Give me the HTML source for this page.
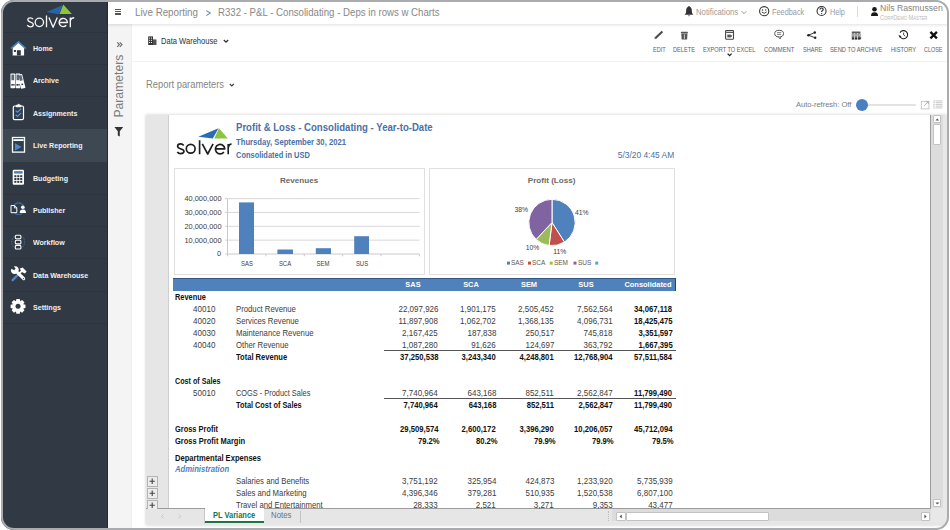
<!DOCTYPE html><html><head><meta charset="utf-8"><style>
*{margin:0;padding:0;box-sizing:border-box}
html,body{width:950px;height:530px;overflow:hidden;background:#fff;font-family:"Liberation Sans",sans-serif}
.a{position:absolute}
.t{position:absolute;line-height:1;white-space:nowrap}
#clip{position:absolute;left:0;top:0;width:950px;height:530px;clip-path:inset(0px 1px 0px 1px round 13px);background:#fff;overflow:hidden}
#bord{position:absolute;left:1px;top:0;width:948px;height:530px;border:2.3px solid #a9abae;border-bottom-width:2.6px;border-radius:13px;z-index:50}
</style></head><body>
<div id="clip">
<div class="a" style="left:0;top:0;width:108px;height:530px;background:#313944"></div>
<div class="a" style="left:106.5px;top:0;width:1.5px;height:530px;background:#262c35"></div>
<svg class="a" style="left:0;top:0" width="108" height="32" viewBox="0 0 108 32"><polygon points="46.4,12 62.6,5.2 58.8,14.2" fill="#2765ab"/><polygon points="63.3,4.4 71.9,14 59.5,14" fill="#8cc43f"/><g fill="none" stroke="#f4f4f4" stroke-width="1.35" stroke-linejoin="round"><path d="M33,19.2 C32.2,18 31,17.8 30.3,17.8 C28.6,17.8 27.8,18.7 27.8,19.8 C27.8,22.6 33.3,21.6 33.3,24.6 C33.3,26 32.2,26.8 30.4,26.8 C29,26.8 27.9,26.2 27.3,25.2"/><circle cx="39.35" cy="22.35" r="4.2"/><path d="M46.5,15.4 V27.3"/><path d="M48.9,17.6 L53.1,27.2 L57.3,17.6"/><path d="M59.4,22.5 H67.4 A4.15,4.15 0 1 0 66.3,25.3"/><path d="M70.3,27.3 V17.6 M70.3,20.6 C70.9,18.4 72.2,17.7 74.2,17.7"/></g></svg>
<div class="a" style="left:3px;top:31.50px;width:104px;height:1px;background:#2d343e"></div>
<div class="a" style="left:3px;top:63.90px;width:104px;height:1px;background:#2d343e"></div>
<div class="a" style="left:3px;top:96.30px;width:104px;height:1px;background:#2d343e"></div>
<div class="a" style="left:3px;top:128.70px;width:104px;height:1px;background:#2d343e"></div>
<div class="a" style="left:3px;top:161.10px;width:104px;height:1px;background:#2d343e"></div>
<div class="a" style="left:3px;top:193.50px;width:104px;height:1px;background:#2d343e"></div>
<div class="a" style="left:3px;top:225.90px;width:104px;height:1px;background:#2d343e"></div>
<div class="a" style="left:3px;top:258.30px;width:104px;height:1px;background:#2d343e"></div>
<div class="a" style="left:3px;top:290.70px;width:104px;height:1px;background:#2d343e"></div>
<div class="a" style="left:3px;top:323.10px;width:104px;height:1px;background:#2d343e"></div>
<div class="a" style="left:3px;top:129.20px;width:104px;height:32.40px;background:#3e4853"></div>
<div class="t" style="left:32.80px;top:45.08px;font-size:7.7px;color:#f0f0f0;font-weight:bold;font-style:normal;transform:scaleX(0.92);transform-origin:left;">Home</div>
<div class="t" style="left:32.80px;top:77.48px;font-size:7.7px;color:#f0f0f0;font-weight:bold;font-style:normal;transform:scaleX(0.92);transform-origin:left;">Archive</div>
<div class="t" style="left:32.80px;top:109.88px;font-size:7.7px;color:#f0f0f0;font-weight:bold;font-style:normal;transform:scaleX(0.92);transform-origin:left;">Assignments</div>
<div class="t" style="left:32.80px;top:142.28px;font-size:7.7px;color:#f0f0f0;font-weight:bold;font-style:normal;transform:scaleX(0.92);transform-origin:left;">Live Reporting</div>
<div class="t" style="left:32.80px;top:174.68px;font-size:7.7px;color:#f0f0f0;font-weight:bold;font-style:normal;transform:scaleX(0.92);transform-origin:left;">Budgeting</div>
<div class="t" style="left:32.80px;top:207.08px;font-size:7.7px;color:#f0f0f0;font-weight:bold;font-style:normal;transform:scaleX(0.92);transform-origin:left;">Publisher</div>
<div class="t" style="left:32.80px;top:239.48px;font-size:7.7px;color:#f0f0f0;font-weight:bold;font-style:normal;transform:scaleX(0.92);transform-origin:left;">Workflow</div>
<div class="t" style="left:32.80px;top:271.88px;font-size:7.7px;color:#f0f0f0;font-weight:bold;font-style:normal;transform:scaleX(0.92);transform-origin:left;">Data Warehouse</div>
<div class="t" style="left:32.80px;top:304.28px;font-size:7.7px;color:#f0f0f0;font-weight:bold;font-style:normal;transform:scaleX(0.92);transform-origin:left;">Settings</div>
<div class="a" style="left:108px;top:23.7px;width:24px;height:507px;background:#f4f4f4"></div>
<div class="a" style="left:131.2px;top:23.7px;width:1px;height:507px;background:#efefef"></div>
<div class="a" style="left:108px;top:0;width:842px;height:23.7px;background:#fff;box-shadow:0 1px 3px rgba(0,0,0,0.13);z-index:3"></div>
<div class="a" style="left:0;top:0;width:950px;height:30px;z-index:4">
<div class="a" style="left:115.2px;top:8.6px;width:6.2px;height:1.3px;background:#555"></div>
<div class="a" style="left:115.2px;top:11px;width:6.2px;height:1.3px;background:#555"></div>
<div class="a" style="left:115.2px;top:13.4px;width:6.2px;height:1.3px;background:#555"></div>
<div class="t" style="left:135.30px;top:8.10px;font-size:10.4px;color:#888888;font-weight:normal;font-style:normal;transform:scaleX(0.94);transform-origin:left;">Live Reporting</div>
<svg class="a" style="left:203px;top:8px" width="10" height="10" viewBox="0 0 10 10"><polyline points="3.3,2.6 7.3,5.1 3.3,7.6" fill="none" stroke="#5f86b3" stroke-width="1.05"/></svg>
<div class="t" style="left:217.80px;top:8.10px;font-size:10.4px;color:#888888;font-weight:normal;font-style:normal;transform:scaleX(0.928);transform-origin:left;">R332 - P&amp;L - Consolidating - Deps in rows w Charts</div>
<svg class="a" style="left:683px;top:5px" width="12" height="13" viewBox="0 0 12 13"><path d="M6,1.8 C3.8,1.8 3.2,3.6 3.2,5.6 C3.2,8 2.6,8.8 1.6,9.8 H10.4 C9.4,8.8 8.8,8 8.8,5.6 C8.8,3.6 8.2,1.8 6,1.8 Z" fill="#333"/><rect x="5.4" y="1" width="1.2" height="1.4" fill="#333"/><path d="M4.8,10.4 A1.3,1.3 0 0 0 7.2,10.4 Z" fill="#333"/></svg>
<div class="t" style="left:696.00px;top:8.15px;font-size:8.8px;color:#9a9a9a;font-weight:normal;font-style:normal;transform:scaleX(0.88);transform-origin:left;">Notifications</div>
<svg class="a" style="left:740px;top:9px" width="8" height="7" viewBox="0 0 8 7"><polyline points="1.6,2.2 4,4.6 6.4,2.2" fill="none" stroke="#999" stroke-width="1"/></svg>
<svg class="a" style="left:758px;top:5px" width="12" height="12" viewBox="0 0 12 12"><circle cx="6.2" cy="6.2" r="4.6" fill="none" stroke="#333" stroke-width="1.1"/><circle cx="4.6" cy="5" r="0.7" fill="#333"/><circle cx="7.8" cy="5" r="0.7" fill="#333"/><path d="M3.8,7 Q6.2,9.6 8.6,7" fill="none" stroke="#333" stroke-width="0.9"/></svg>
<div class="t" style="left:771.90px;top:8.15px;font-size:8.8px;color:#9a9a9a;font-weight:normal;font-style:normal;transform:scaleX(0.836);transform-origin:left;">Feedback</div>
<svg class="a" style="left:815px;top:5px" width="12" height="12" viewBox="0 0 12 12"><circle cx="6.55" cy="5.95" r="4.5" fill="none" stroke="#333" stroke-width="1.1"/><path d="M5,4.6 C5,3.5 5.7,3 6.6,3 C7.6,3 8.2,3.6 8.2,4.4 C8.2,5.6 6.6,5.6 6.6,7" fill="none" stroke="#333" stroke-width="1.2"/><circle cx="6.6" cy="8.6" r="0.7" fill="#333"/></svg>
<div class="t" style="left:829.70px;top:8.15px;font-size:8.8px;color:#9a9a9a;font-weight:normal;font-style:normal;transform:scaleX(0.82);transform-origin:left;">Help</div>
<div class="a" style="left:856.5px;top:6.3px;width:0.9px;height:10.7px;background:#dcdcdc"></div>
<svg class="a" style="left:869px;top:6px" width="11" height="11" viewBox="0 0 11 11"><circle cx="5.5" cy="3.3" r="2.3" fill="#1a1a1a"/><path d="M2,9.9 C2,7.4 3.3,6.3 5.5,6.3 C7.7,6.3 9,7.4 9,9.9 Z" fill="#1a1a1a"/></svg>
<div class="t" style="left:880.30px;top:3.61px;font-size:9.2px;color:#858585;font-weight:normal;font-style:normal;transform:scaleX(0.945);transform-origin:left;">Nils Rasmussen</div>
<div class="t" style="left:880.3px;top:15.3px;font-size:6.6px;color:#b8b8b8;font-variant:small-caps;transform:scaleX(0.85);transform-origin:left">CorpDemo Master</div>
</div>
<div class="a" style="left:132.2px;top:61.2px;width:818px;height:0.8px;background:#f1f1f1"></div>
<svg class="a" style="left:147px;top:35px" width="11" height="11" viewBox="0 0 11 11"><rect x="1.2" y="1.4" width="4.8" height="8.6" fill="#333"/><rect x="6" y="4.4" width="3.5" height="5.6" fill="#555"/><rect x="2.1" y="2.6" width="1" height="1" fill="#fff"/><rect x="4" y="2.6" width="1" height="1" fill="#fff"/><rect x="2.1" y="4.8" width="1" height="1" fill="#fff"/><rect x="4" y="4.8" width="1" height="1" fill="#fff"/><rect x="2.1" y="7" width="1" height="1" fill="#fff"/><rect x="4" y="7" width="1" height="1" fill="#fff"/></svg>
<div class="t" style="left:161.40px;top:36.92px;font-size:8.6px;color:#303030;font-weight:normal;font-style:normal;transform:scaleX(0.88);transform-origin:left;">Data Warehouse</div>
<svg class="a" style="left:222px;top:38px" width="8" height="7" viewBox="0 0 8 7"><polyline points="1.8,2 4,4.2 6.2,2" fill="none" stroke="#333" stroke-width="1.3"/></svg>
<div class="t" style="left:652.60px;top:46.76px;font-size:6.9px;color:#5e5e5e;font-weight:normal;font-style:normal;transform:scaleX(0.81);transform-origin:left;">EDIT</div>
<div class="t" style="left:673.00px;top:46.76px;font-size:6.9px;color:#5e5e5e;font-weight:normal;font-style:normal;transform:scaleX(0.82);transform-origin:left;">DELETE</div>
<div class="t" style="left:703.00px;top:46.76px;font-size:6.9px;color:#5e5e5e;font-weight:normal;font-style:normal;transform:scaleX(0.82);transform-origin:left;">EXPORT TO EXCEL</div>
<div class="t" style="left:763.60px;top:46.76px;font-size:6.9px;color:#5e5e5e;font-weight:normal;font-style:normal;transform:scaleX(0.854);transform-origin:left;">COMMENT</div>
<div class="t" style="left:802.70px;top:46.76px;font-size:6.9px;color:#5e5e5e;font-weight:normal;font-style:normal;transform:scaleX(0.813);transform-origin:left;">SHARE</div>
<div class="t" style="left:830.00px;top:46.76px;font-size:6.9px;color:#5e5e5e;font-weight:normal;font-style:normal;transform:scaleX(0.837);transform-origin:left;">SEND TO ARCHIVE</div>
<div class="t" style="left:890.90px;top:46.76px;font-size:6.9px;color:#5e5e5e;font-weight:normal;font-style:normal;transform:scaleX(0.823);transform-origin:left;">HISTORY</div>
<div class="t" style="left:924.00px;top:46.76px;font-size:6.9px;color:#5e5e5e;font-weight:normal;font-style:normal;transform:scaleX(0.788);transform-origin:left;">CLOSE</div>
<svg class="a" style="left:0;top:0;z-index:5" width="950" height="62" viewBox="0 0 950 62"><path d="M655,38.6 L662.4,31.6" stroke="#4a4a4a" stroke-width="2.1"/><path d="M654.3,39.3 L655.3,37.4 L656.2,38.3 Z" fill="#888"/><rect x="680.9" y="31.8" width="7" height="1.5" rx="0.4" fill="#555"/><path d="M681.3,33.6 H687.5 L687.1,39.6 H681.7 Z" fill="#555"/><rect x="683.9" y="34.4" width="0.9" height="4.4" fill="#ddd"/><rect x="725.6" y="30.6" width="7.9" height="8.6" rx="0.6" fill="none" stroke="#444" stroke-width="1.1"/><rect x="726.2" y="32" width="6.8" height="0.9" fill="#444"/><rect x="727.3" y="34.6" width="3.6" height="2.8" fill="#555"/><path d="M730.9,34.8 L732.3,36 L730.9,37.2 Z" fill="#555"/><polyline points="727.6,53.6 729.6,55.6 731.6,53.6" fill="none" stroke="#222" stroke-width="1.3"/><ellipse cx="779.1" cy="33.6" rx="4.4" ry="3.3" fill="none" stroke="#555" stroke-width="1"/><path d="M778.6,36.9 L780.2,39 L781,36.6" fill="#fff" stroke="#555" stroke-width="0.9"/><rect x="777" y="32.3" width="4.2" height="0.8" fill="#666"/><rect x="777" y="33.9" width="4.2" height="0.8" fill="#666"/><path d="M808.5,35.2 L814.8,32.5 M808.5,35.2 L815.2,37.8" stroke="#222" stroke-width="0.9"/><circle cx="808.5" cy="35.2" r="1.3" fill="#222"/><circle cx="814.8" cy="32.5" r="1.2" fill="#222"/><circle cx="815.2" cy="37.8" r="1.2" fill="#222"/><rect x="851.8" y="31.6" width="8.6" height="1.2" fill="#333"/><rect x="851.8" y="33.4" width="2.4" height="6.2" fill="#333"/><rect x="854.8" y="33.4" width="2.4" height="6.2" fill="#333"/><rect x="857.8" y="33.4" width="2.6" height="6.2" fill="#333"/><rect x="852.3" y="34.2" width="1.4" height="1.6" fill="#fff"/><rect x="855.3" y="34.2" width="1.4" height="1.6" fill="#fff"/><rect x="858.4" y="34.2" width="1.4" height="1.6" fill="#fff"/><rect x="851.8" y="36.6" width="8.6" height="0.6" fill="#fff"/><path d="M859.6,37.6 L861.4,37.6 L860.5,39.6 Z" fill="#333"/><path d="M899.9,36.6 A4.1,4.1 0 1 0 900,32.6" fill="none" stroke="#222" stroke-width="1.1"/><path d="M898.2,35.6 L901.6,35.6 L899.9,37.6 Z" fill="#222" transform="rotate(20 899.9 36.2)"/><path d="M903.6,32.6 V34.9 L905.2,36.2" fill="none" stroke="#333" stroke-width="0.9"/><path d="M930.4,31.9 L936.9,38.4 M936.9,31.9 L930.4,38.4" stroke="#111" stroke-width="2.3"/></svg>
<div class="t" style="left:146.20px;top:80.48px;font-size:10.3px;color:#858585;font-weight:normal;font-style:normal;transform:scaleX(0.909);transform-origin:left;">Report parameters</div>
<svg class="a" style="left:228px;top:82.2px" width="8" height="7" viewBox="0 0 8 7"><polyline points="1.8,2 3.8,4 5.8,2" fill="none" stroke="#444" stroke-width="1.2"/></svg>
<div class="t" style="left:86.6px;top:80.3px;width:63.4px;font-size:12.2px;color:#7c7c7c;transform:rotate(-90deg);transform-origin:center;text-align:center">Parameters</div>
<svg class="a" style="left:113px;top:40px" width="12" height="100" viewBox="0 0 12 100"><path d="M4.2,2.4 L6.4,4.6 L4.2,6.8 M6.8,2.4 L9,4.6 L6.8,6.8" fill="none" stroke="#666" stroke-width="1.1"/><path d="M1.4,87 H10.2 L6.8,91.3 V96.5 L4.8,95.6 V91.3 Z" fill="#333"/></svg>
<div class="t" style="left:796.00px;top:101.05px;font-size:7.5px;color:#7a7a7a;font-weight:normal;font-style:normal;">Auto-refresh: Off</div>
<div class="a" style="left:862px;top:103.5px;width:54px;height:2.8px;border-radius:1.4px;background:#e2e2e2"></div>
<div class="a" style="left:856px;top:99px;width:12px;height:12px;border-radius:6px;background:#4a7fc0"></div>
<svg class="a" style="left:918px;top:98px" width="28" height="13" viewBox="0 0 28 13"><rect x="3.3" y="3.3" width="7.6" height="7.6" fill="none" stroke="#c4c4c4" stroke-width="0.9"/><path d="M6,8 L10.4,3.6 M8,3.6 H10.4 V6" fill="none" stroke="#b0b0b0" stroke-width="0.9"/><rect x="15.2" y="2.40" width="9.2" height="1" fill="#c8c8c8"/><rect x="15.2" y="4.15" width="9.2" height="1" fill="#c8c8c8"/><rect x="15.2" y="5.90" width="9.2" height="1" fill="#c8c8c8"/><rect x="15.2" y="7.65" width="9.2" height="1" fill="#c8c8c8"/><rect x="15.2" y="9.40" width="9.2" height="1" fill="#c8c8c8"/><rect x="16.8" y="2.4" width="0.8" height="8" fill="#fff"/></svg>
<div class="a" style="left:145.5px;top:114.5px;width:801px;height:410px;background:#e8e8e8;box-shadow:0 0 3px rgba(0,0,0,0.22)"></div>
<div class="a" style="left:145.5px;top:114.5px;width:23px;height:394px;background:#e6e6e6"></div>
<div class="a" style="left:168px;top:114.5px;width:0.8px;height:394px;background:#cfcfcf"></div>
<div class="a" style="left:168.8px;top:114.5px;width:761.6px;height:393.5px;background:#fff"></div>
<div class="a" style="left:930.2px;top:114.5px;width:0.9px;height:394.5px;background:#9c9c9c"></div>
<div class="a" style="left:145.5px;top:508px;width:785.6px;height:0.9px;background:#9c9c9c"></div>
<svg class="a" style="left:0;top:0" width="700" height="170" viewBox="0 0 700 170"><polygon points="198.3,136.8 218.5,128.2 212.8,138.5" fill="#2a6cb6"/><polygon points="219,128.2 227.9,138.5 214.3,138.5" fill="#8cc43f"/><g fill="none" stroke="#1e1e1e" stroke-width="1.65" stroke-linejoin="round"><path d="M183.7,145.5 C182.9,144.3 181.6,143.9 180.6,143.9 C178.6,143.9 177.6,145 177.6,146.3 C177.6,149.6 184,148.4 184,151.3 C184,152.9 182.7,153.6 180.8,153.6 C179.2,153.6 177.9,152.9 177.3,151.8"/><circle cx="190.7" cy="148.75" r="4.4"/><path d="M199.6,140.2 V154.2"/><path d="M202.3,143.9 L207.7,154 L213.1,143.9"/><path d="M215.4,148.9 H224.8 A4.7,4.7 0 1 0 223.9,151.9"/><path d="M228.2,154.2 V143.9 M228.2,147.6 C228.7,145 229.8,144 231.6,144"/></g></svg>
<div class="t" style="left:236.20px;top:121.94px;font-size:10.7px;color:#4b70a6;font-weight:bold;font-style:normal;transform:scaleX(0.896);transform-origin:left;">Profit &amp; Loss - Consolidating - Year-to-Date</div>
<div class="t" style="left:236.20px;top:138.11px;font-size:9.2px;color:#4b70a6;font-weight:bold;font-style:normal;transform:scaleX(0.836);transform-origin:left;">Thursday, September 30, 2021</div>
<div class="t" style="left:236.20px;top:151.31px;font-size:9.2px;color:#4b70a6;font-weight:bold;font-style:normal;transform:scaleX(0.812);transform-origin:left;">Consolidated in USD</div>
<div class="t" style="right:276.00px;top:150.80px;font-size:8.5px;color:#4b70a6;font-weight:normal;font-style:normal;transform:scaleX(0.985);transform-origin:right;">5/3/20 4:45 AM</div>
<div class="a" style="left:173.9px;top:168.3px;width:251.4px;height:107.2px;border:0.8px solid #e0e0e0"></div>
<div class="a" style="left:429.2px;top:168.3px;width:245.6px;height:107.2px;border:0.8px solid #e0e0e0"></div>
<div class="t" style="left:-0.90px;width:600px;text-align:center;top:176.54px;font-size:8.1px;color:#6a6a6a;font-weight:bold;font-style:normal;">Revenues</div>
<div class="t" style="left:251.60px;width:600px;text-align:center;top:176.54px;font-size:8.1px;color:#6a6a6a;font-weight:bold;font-style:normal;">Profit (Loss)</div>
<div class="t" style="right:728.60px;top:194.95px;font-size:7.5px;color:#404040;font-weight:normal;font-style:normal;transform:scaleX(0.99);transform-origin:right;">40,000,000</div>
<div class="t" style="right:728.60px;top:208.80px;font-size:7.5px;color:#404040;font-weight:normal;font-style:normal;transform:scaleX(0.99);transform-origin:right;">30,000,000</div>
<div class="t" style="right:728.60px;top:222.65px;font-size:7.5px;color:#404040;font-weight:normal;font-style:normal;transform:scaleX(0.99);transform-origin:right;">20,000,000</div>
<div class="t" style="right:728.60px;top:236.50px;font-size:7.5px;color:#404040;font-weight:normal;font-style:normal;transform:scaleX(0.99);transform-origin:right;">10,000,000</div>
<div class="t" style="right:728.60px;top:250.35px;font-size:7.5px;color:#404040;font-weight:normal;font-style:normal;transform:scaleX(0.99);transform-origin:right;">0</div>
<svg class="a" style="left:0;top:0" width="700" height="280" viewBox="0 0 700 280"><path d="M227.5,198.6 H419.4" stroke="#d4d4d4" stroke-width="0.9"/><path d="M227.5,212.45 H419.4" stroke="#d4d4d4" stroke-width="0.9"/><path d="M227.5,226.3 H419.4" stroke="#d4d4d4" stroke-width="0.9"/><path d="M227.5,240.15 H419.4" stroke="#d4d4d4" stroke-width="0.9"/><path d="M225.3,254 H419.4" stroke="#c4c4c4" stroke-width="0.9"/><path d="M225.3,198.6 H227.5" stroke="#c4c4c4" stroke-width="0.9"/><path d="M225.3,212.45 H227.5" stroke="#c4c4c4" stroke-width="0.9"/><path d="M225.3,226.3 H227.5" stroke="#c4c4c4" stroke-width="0.9"/><path d="M225.3,240.15 H227.5" stroke="#c4c4c4" stroke-width="0.9"/><path d="M227.5,198.6 V254" stroke="#c4c4c4" stroke-width="0.9"/><path d="M227.5,254 V256.3" stroke="#c4c4c4" stroke-width="0.9"/><path d="M265.9,254 V256.3" stroke="#c4c4c4" stroke-width="0.9"/><path d="M304.3,254 V256.3" stroke="#c4c4c4" stroke-width="0.9"/><path d="M342.7,254 V256.3" stroke="#c4c4c4" stroke-width="0.9"/><path d="M381.1,254 V256.3" stroke="#c4c4c4" stroke-width="0.9"/><path d="M419.4,254 V256.3" stroke="#c4c4c4" stroke-width="0.9"/><rect x="239" y="202.4" width="15" height="51.599999999999994" fill="#4f81bd"/><rect x="277.4" y="249.5" width="15.600000000000023" height="4.5" fill="#4f81bd"/><rect x="315.8" y="248.2" width="15.199999999999989" height="5.800000000000011" fill="#4f81bd"/><rect x="354.2" y="236.2" width="14.800000000000011" height="17.80000000000001" fill="#4f81bd"/><path d="M552.0,222.5 L552.00,199.30 A23.2,23.2 0 0 1 564.43,242.09 Z" fill="#4f81bd" stroke="#fff" stroke-width="1"/><path d="M552.0,222.5 L564.43,242.09 A23.2,23.2 0 0 1 549.09,245.52 Z" fill="#c0504d" stroke="#fff" stroke-width="1"/><path d="M552.0,222.5 L549.09,245.52 A23.2,23.2 0 0 1 536.12,239.41 Z" fill="#9bbb59" stroke="#fff" stroke-width="1"/><path d="M552.0,222.5 L536.12,239.41 A23.2,23.2 0 0 1 552.00,199.30 Z" fill="#8064a2" stroke="#fff" stroke-width="1"/><rect x="507" y="261.6" width="3" height="3" fill="#4f81bd"/><rect x="528" y="261.6" width="3" height="3" fill="#c0504d"/><rect x="549.7" y="261.6" width="3" height="3" fill="#9bbb59"/><rect x="573.5" y="261.6" width="3" height="3" fill="#8064a2"/><rect x="595.2" y="261.6" width="3" height="3" fill="#4bacc6"/></svg>
<div class="t" style="left:-53.50px;width:600px;text-align:center;top:261.41px;font-size:6.6px;color:#404040;font-weight:normal;font-style:normal;transform:scaleX(0.9);transform-origin:center;">SAS</div>
<div class="t" style="left:-14.80px;width:600px;text-align:center;top:261.41px;font-size:6.6px;color:#404040;font-weight:normal;font-style:normal;transform:scaleX(0.9);transform-origin:center;">SCA</div>
<div class="t" style="left:23.40px;width:600px;text-align:center;top:261.41px;font-size:6.6px;color:#404040;font-weight:normal;font-style:normal;transform:scaleX(0.9);transform-origin:center;">SEM</div>
<div class="t" style="left:61.60px;width:600px;text-align:center;top:261.41px;font-size:6.6px;color:#404040;font-weight:normal;font-style:normal;transform:scaleX(0.9);transform-origin:center;">SUS</div>
<div class="t" style="left:281.70px;width:600px;text-align:center;top:210.04px;font-size:6.8px;color:#404040;font-weight:normal;font-style:normal;">41%</div>
<div class="t" style="left:221.20px;width:600px;text-align:center;top:207.44px;font-size:6.8px;color:#404040;font-weight:normal;font-style:normal;">38%</div>
<div class="t" style="left:232.60px;width:600px;text-align:center;top:245.34px;font-size:6.8px;color:#404040;font-weight:normal;font-style:normal;">10%</div>
<div class="t" style="left:259.70px;width:600px;text-align:center;top:248.64px;font-size:6.8px;color:#404040;font-weight:normal;font-style:normal;">11%</div>
<div class="t" style="left:511.30px;top:259.84px;font-size:6.8px;color:#595959;font-weight:normal;font-style:normal;transform:scaleX(0.95);transform-origin:left;">SAS</div>
<div class="t" style="left:532.00px;top:259.84px;font-size:6.8px;color:#595959;font-weight:normal;font-style:normal;transform:scaleX(0.95);transform-origin:left;">SCA</div>
<div class="t" style="left:553.50px;top:259.84px;font-size:6.8px;color:#595959;font-weight:normal;font-style:normal;transform:scaleX(0.95);transform-origin:left;">SEM</div>
<div class="t" style="left:578.00px;top:259.84px;font-size:6.8px;color:#595959;font-weight:normal;font-style:normal;transform:scaleX(0.95);transform-origin:left;">SUS</div>
<div class="a" style="left:173.1px;top:278px;width:502.7px;height:12.6px;background:#4f81bd;border-top:1px solid #34587f;border-right:1px solid #2a4566"></div>
<div class="t" style="left:112.60px;width:600px;text-align:center;top:280.90px;font-size:7.8px;color:#ffffff;font-weight:bold;font-style:normal;transform:scaleX(0.954);transform-origin:center;">SAS</div>
<div class="t" style="left:170.70px;width:600px;text-align:center;top:280.90px;font-size:7.8px;color:#ffffff;font-weight:bold;font-style:normal;transform:scaleX(0.954);transform-origin:center;">SCA</div>
<div class="t" style="left:228.50px;width:600px;text-align:center;top:280.90px;font-size:7.8px;color:#ffffff;font-weight:bold;font-style:normal;transform:scaleX(0.954);transform-origin:center;">SEM</div>
<div class="t" style="left:286.20px;width:600px;text-align:center;top:280.90px;font-size:7.8px;color:#ffffff;font-weight:bold;font-style:normal;transform:scaleX(0.954);transform-origin:center;">SUS</div>
<div class="t" style="left:347.70px;width:600px;text-align:center;top:280.90px;font-size:7.8px;color:#ffffff;font-weight:bold;font-style:normal;transform:scaleX(0.954);transform-origin:center;">Consolidated</div>
<div class="t" style="left:174.70px;top:292.54px;font-size:8.7px;color:#111;font-weight:bold;font-style:normal;transform:scaleX(0.8524137931034484);transform-origin:left;">Revenue</div>
<div class="t" style="left:193.20px;top:304.54px;font-size:8.7px;color:#3c3c3c;font-weight:normal;font-style:normal;transform:scaleX(0.9287356321839082);transform-origin:left;">40010</div>
<div class="t" style="left:236.30px;top:304.54px;font-size:8.7px;color:#3c3c3c;font-weight:normal;font-style:normal;transform:scaleX(0.8919540229885058);transform-origin:left;">Product Revenue</div>
<div class="t" style="right:512.00px;top:304.54px;font-size:8.7px;color:#3c3c3c;font-weight:normal;font-style:normal;transform:scaleX(0.9195402298850576);transform-origin:right;">22,097,926</div>
<div class="t" style="right:454.00px;top:304.54px;font-size:8.7px;color:#3c3c3c;font-weight:normal;font-style:normal;transform:scaleX(0.9195402298850576);transform-origin:right;">1,901,175</div>
<div class="t" style="right:396.00px;top:304.54px;font-size:8.7px;color:#3c3c3c;font-weight:normal;font-style:normal;transform:scaleX(0.9195402298850576);transform-origin:right;">2,505,452</div>
<div class="t" style="right:337.70px;top:304.54px;font-size:8.7px;color:#3c3c3c;font-weight:normal;font-style:normal;transform:scaleX(0.9195402298850576);transform-origin:right;">7,562,564</div>
<div class="t" style="right:277.70px;top:304.54px;font-size:8.7px;color:#111;font-weight:bold;font-style:normal;transform:scaleX(0.8827586206896553);transform-origin:right;">34,067,118</div>
<div class="t" style="left:193.20px;top:316.54px;font-size:8.7px;color:#3c3c3c;font-weight:normal;font-style:normal;transform:scaleX(0.9287356321839082);transform-origin:left;">40020</div>
<div class="t" style="left:236.30px;top:316.54px;font-size:8.7px;color:#3c3c3c;font-weight:normal;font-style:normal;transform:scaleX(0.8919540229885058);transform-origin:left;">Services Revenue</div>
<div class="t" style="right:512.00px;top:316.54px;font-size:8.7px;color:#3c3c3c;font-weight:normal;font-style:normal;transform:scaleX(0.9195402298850576);transform-origin:right;">11,897,908</div>
<div class="t" style="right:454.00px;top:316.54px;font-size:8.7px;color:#3c3c3c;font-weight:normal;font-style:normal;transform:scaleX(0.9195402298850576);transform-origin:right;">1,062,702</div>
<div class="t" style="right:396.00px;top:316.54px;font-size:8.7px;color:#3c3c3c;font-weight:normal;font-style:normal;transform:scaleX(0.9195402298850576);transform-origin:right;">1,368,135</div>
<div class="t" style="right:337.70px;top:316.54px;font-size:8.7px;color:#3c3c3c;font-weight:normal;font-style:normal;transform:scaleX(0.9195402298850576);transform-origin:right;">4,096,731</div>
<div class="t" style="right:277.70px;top:316.54px;font-size:8.7px;color:#111;font-weight:bold;font-style:normal;transform:scaleX(0.8827586206896553);transform-origin:right;">18,425,475</div>
<div class="t" style="left:193.20px;top:328.54px;font-size:8.7px;color:#3c3c3c;font-weight:normal;font-style:normal;transform:scaleX(0.9287356321839082);transform-origin:left;">40030</div>
<div class="t" style="left:236.30px;top:328.54px;font-size:8.7px;color:#3c3c3c;font-weight:normal;font-style:normal;transform:scaleX(0.8919540229885058);transform-origin:left;">Maintenance Revenue</div>
<div class="t" style="right:512.00px;top:328.54px;font-size:8.7px;color:#3c3c3c;font-weight:normal;font-style:normal;transform:scaleX(0.9195402298850576);transform-origin:right;">2,167,425</div>
<div class="t" style="right:454.00px;top:328.54px;font-size:8.7px;color:#3c3c3c;font-weight:normal;font-style:normal;transform:scaleX(0.9195402298850576);transform-origin:right;">187,838</div>
<div class="t" style="right:396.00px;top:328.54px;font-size:8.7px;color:#3c3c3c;font-weight:normal;font-style:normal;transform:scaleX(0.9195402298850576);transform-origin:right;">250,517</div>
<div class="t" style="right:337.70px;top:328.54px;font-size:8.7px;color:#3c3c3c;font-weight:normal;font-style:normal;transform:scaleX(0.9195402298850576);transform-origin:right;">745,818</div>
<div class="t" style="right:277.70px;top:328.54px;font-size:8.7px;color:#111;font-weight:bold;font-style:normal;transform:scaleX(0.8827586206896553);transform-origin:right;">3,351,597</div>
<div class="t" style="left:193.20px;top:340.54px;font-size:8.7px;color:#3c3c3c;font-weight:normal;font-style:normal;transform:scaleX(0.9287356321839082);transform-origin:left;">40040</div>
<div class="t" style="left:236.30px;top:340.54px;font-size:8.7px;color:#3c3c3c;font-weight:normal;font-style:normal;transform:scaleX(0.8919540229885058);transform-origin:left;">Other Revenue</div>
<div class="t" style="right:512.00px;top:340.54px;font-size:8.7px;color:#3c3c3c;font-weight:normal;font-style:normal;transform:scaleX(0.9195402298850576);transform-origin:right;">1,087,280</div>
<div class="t" style="right:454.00px;top:340.54px;font-size:8.7px;color:#3c3c3c;font-weight:normal;font-style:normal;transform:scaleX(0.9195402298850576);transform-origin:right;">91,626</div>
<div class="t" style="right:396.00px;top:340.54px;font-size:8.7px;color:#3c3c3c;font-weight:normal;font-style:normal;transform:scaleX(0.9195402298850576);transform-origin:right;">124,697</div>
<div class="t" style="right:337.70px;top:340.54px;font-size:8.7px;color:#3c3c3c;font-weight:normal;font-style:normal;transform:scaleX(0.9195402298850576);transform-origin:right;">363,792</div>
<div class="t" style="right:277.70px;top:340.54px;font-size:8.7px;color:#111;font-weight:bold;font-style:normal;transform:scaleX(0.8827586206896553);transform-origin:right;">1,667,395</div>
<div class="a" style="left:384px;top:350.2px;width:291.5px;height:0.9px;background:#555"></div>
<div class="t" style="left:236.30px;top:352.54px;font-size:8.7px;color:#111;font-weight:bold;font-style:normal;transform:scaleX(0.8698850574712644);transform-origin:left;">Total Revenue</div>
<div class="t" style="right:512.00px;top:352.54px;font-size:8.7px;color:#111;font-weight:bold;font-style:normal;transform:scaleX(0.8827586206896553);transform-origin:right;">37,250,538</div>
<div class="t" style="right:454.00px;top:352.54px;font-size:8.7px;color:#111;font-weight:bold;font-style:normal;transform:scaleX(0.8827586206896553);transform-origin:right;">3,243,340</div>
<div class="t" style="right:396.00px;top:352.54px;font-size:8.7px;color:#111;font-weight:bold;font-style:normal;transform:scaleX(0.8827586206896553);transform-origin:right;">4,248,801</div>
<div class="t" style="right:337.70px;top:352.54px;font-size:8.7px;color:#111;font-weight:bold;font-style:normal;transform:scaleX(0.8827586206896553);transform-origin:right;">12,768,904</div>
<div class="t" style="right:277.70px;top:352.54px;font-size:8.7px;color:#111;font-weight:bold;font-style:normal;transform:scaleX(0.8827586206896553);transform-origin:right;">57,511,584</div>
<div class="t" style="left:174.70px;top:376.54px;font-size:8.7px;color:#111;font-weight:bold;font-style:normal;transform:scaleX(0.8275862068965518);transform-origin:left;">Cost of Sales</div>
<div class="t" style="left:193.20px;top:388.54px;font-size:8.7px;color:#3c3c3c;font-weight:normal;font-style:normal;transform:scaleX(0.9287356321839082);transform-origin:left;">50010</div>
<div class="t" style="left:236.30px;top:388.54px;font-size:8.7px;color:#3c3c3c;font-weight:normal;font-style:normal;transform:scaleX(0.8505747126436783);transform-origin:left;">COGS - Product Sales</div>
<div class="t" style="right:512.00px;top:388.54px;font-size:8.7px;color:#3c3c3c;font-weight:normal;font-style:normal;transform:scaleX(0.9195402298850576);transform-origin:right;">7,740,964</div>
<div class="t" style="right:454.00px;top:388.54px;font-size:8.7px;color:#3c3c3c;font-weight:normal;font-style:normal;transform:scaleX(0.9195402298850576);transform-origin:right;">643,168</div>
<div class="t" style="right:396.00px;top:388.54px;font-size:8.7px;color:#3c3c3c;font-weight:normal;font-style:normal;transform:scaleX(0.9195402298850576);transform-origin:right;">852,511</div>
<div class="t" style="right:337.70px;top:388.54px;font-size:8.7px;color:#3c3c3c;font-weight:normal;font-style:normal;transform:scaleX(0.9195402298850576);transform-origin:right;">2,562,847</div>
<div class="t" style="right:277.70px;top:388.54px;font-size:8.7px;color:#111;font-weight:bold;font-style:normal;transform:scaleX(0.8827586206896553);transform-origin:right;">11,799,490</div>
<div class="a" style="left:384px;top:398.0px;width:291.5px;height:0.9px;background:#555"></div>
<div class="t" style="left:236.30px;top:400.54px;font-size:8.7px;color:#111;font-weight:bold;font-style:normal;transform:scaleX(0.845977011494253);transform-origin:left;">Total Cost of Sales</div>
<div class="t" style="right:512.00px;top:400.54px;font-size:8.7px;color:#111;font-weight:bold;font-style:normal;transform:scaleX(0.8827586206896553);transform-origin:right;">7,740,964</div>
<div class="t" style="right:454.00px;top:400.54px;font-size:8.7px;color:#111;font-weight:bold;font-style:normal;transform:scaleX(0.8827586206896553);transform-origin:right;">643,168</div>
<div class="t" style="right:396.00px;top:400.54px;font-size:8.7px;color:#111;font-weight:bold;font-style:normal;transform:scaleX(0.8827586206896553);transform-origin:right;">852,511</div>
<div class="t" style="right:337.70px;top:400.54px;font-size:8.7px;color:#111;font-weight:bold;font-style:normal;transform:scaleX(0.8827586206896553);transform-origin:right;">2,562,847</div>
<div class="t" style="right:277.70px;top:400.54px;font-size:8.7px;color:#111;font-weight:bold;font-style:normal;transform:scaleX(0.8827586206896553);transform-origin:right;">11,799,490</div>
<div class="t" style="left:174.70px;top:424.54px;font-size:8.7px;color:#111;font-weight:bold;font-style:normal;transform:scaleX(0.8551724137931036);transform-origin:left;">Gross Profit</div>
<div class="t" style="right:512.00px;top:424.54px;font-size:8.7px;color:#111;font-weight:bold;font-style:normal;transform:scaleX(0.8827586206896553);transform-origin:right;">29,509,574</div>
<div class="t" style="right:454.00px;top:424.54px;font-size:8.7px;color:#111;font-weight:bold;font-style:normal;transform:scaleX(0.8827586206896553);transform-origin:right;">2,600,172</div>
<div class="t" style="right:396.00px;top:424.54px;font-size:8.7px;color:#111;font-weight:bold;font-style:normal;transform:scaleX(0.8827586206896553);transform-origin:right;">3,396,290</div>
<div class="t" style="right:337.70px;top:424.54px;font-size:8.7px;color:#111;font-weight:bold;font-style:normal;transform:scaleX(0.8827586206896553);transform-origin:right;">10,206,057</div>
<div class="t" style="right:277.70px;top:424.54px;font-size:8.7px;color:#111;font-weight:bold;font-style:normal;transform:scaleX(0.8827586206896553);transform-origin:right;">45,712,094</div>
<div class="t" style="left:174.70px;top:436.54px;font-size:8.7px;color:#111;font-weight:bold;font-style:normal;transform:scaleX(0.864367816091954);transform-origin:left;">Gross Profit Margin</div>
<div class="t" style="right:510.20px;top:436.54px;font-size:8.7px;color:#111;font-weight:bold;font-style:normal;transform:scaleX(0.8827586206896553);transform-origin:right;">79.2%</div>
<div class="t" style="right:452.20px;top:436.54px;font-size:8.7px;color:#111;font-weight:bold;font-style:normal;transform:scaleX(0.8827586206896553);transform-origin:right;">80.2%</div>
<div class="t" style="right:394.20px;top:436.54px;font-size:8.7px;color:#111;font-weight:bold;font-style:normal;transform:scaleX(0.8827586206896553);transform-origin:right;">79.9%</div>
<div class="t" style="right:335.90px;top:436.54px;font-size:8.7px;color:#111;font-weight:bold;font-style:normal;transform:scaleX(0.8827586206896553);transform-origin:right;">79.9%</div>
<div class="t" style="right:275.90px;top:436.54px;font-size:8.7px;color:#111;font-weight:bold;font-style:normal;transform:scaleX(0.8827586206896553);transform-origin:right;">79.5%</div>
<div class="t" style="left:174.70px;top:453.54px;font-size:8.7px;color:#111;font-weight:bold;font-style:normal;transform:scaleX(0.8735632183908046);transform-origin:left;">Departmental Expenses</div>
<div class="t" style="left:174.70px;top:465.04px;font-size:8.7px;color:#4f81bd;font-weight:bold;font-style:italic;transform:scaleX(0.8827586206896553);transform-origin:left;">Administration</div>
<div class="t" style="left:236.30px;top:477.04px;font-size:8.7px;color:#3c3c3c;font-weight:normal;font-style:normal;transform:scaleX(0.8919540229885058);transform-origin:left;">Salaries and Benefits</div>
<div class="t" style="right:512.00px;top:477.04px;font-size:8.7px;color:#3c3c3c;font-weight:normal;font-style:normal;transform:scaleX(0.9195402298850576);transform-origin:right;">3,751,192</div>
<div class="t" style="right:454.00px;top:477.04px;font-size:8.7px;color:#3c3c3c;font-weight:normal;font-style:normal;transform:scaleX(0.9195402298850576);transform-origin:right;">325,954</div>
<div class="t" style="right:396.00px;top:477.04px;font-size:8.7px;color:#3c3c3c;font-weight:normal;font-style:normal;transform:scaleX(0.9195402298850576);transform-origin:right;">424,873</div>
<div class="t" style="right:337.70px;top:477.04px;font-size:8.7px;color:#3c3c3c;font-weight:normal;font-style:normal;transform:scaleX(0.9195402298850576);transform-origin:right;">1,233,920</div>
<div class="t" style="right:277.70px;top:477.04px;font-size:8.7px;color:#3c3c3c;font-weight:normal;font-style:normal;transform:scaleX(0.9195402298850576);transform-origin:right;">5,735,939</div>
<div class="t" style="left:236.30px;top:489.04px;font-size:8.7px;color:#3c3c3c;font-weight:normal;font-style:normal;transform:scaleX(0.8919540229885058);transform-origin:left;">Sales and Marketing</div>
<div class="t" style="right:512.00px;top:489.04px;font-size:8.7px;color:#3c3c3c;font-weight:normal;font-style:normal;transform:scaleX(0.9195402298850576);transform-origin:right;">4,396,346</div>
<div class="t" style="right:454.00px;top:489.04px;font-size:8.7px;color:#3c3c3c;font-weight:normal;font-style:normal;transform:scaleX(0.9195402298850576);transform-origin:right;">379,281</div>
<div class="t" style="right:396.00px;top:489.04px;font-size:8.7px;color:#3c3c3c;font-weight:normal;font-style:normal;transform:scaleX(0.9195402298850576);transform-origin:right;">510,935</div>
<div class="t" style="right:337.70px;top:489.04px;font-size:8.7px;color:#3c3c3c;font-weight:normal;font-style:normal;transform:scaleX(0.9195402298850576);transform-origin:right;">1,520,538</div>
<div class="t" style="right:277.70px;top:489.04px;font-size:8.7px;color:#3c3c3c;font-weight:normal;font-style:normal;transform:scaleX(0.9195402298850576);transform-origin:right;">6,807,100</div>
<div class="t" style="left:236.30px;top:501.04px;font-size:8.7px;color:#3c3c3c;font-weight:normal;font-style:normal;transform:scaleX(0.8919540229885058);transform-origin:left;">Travel and Entertainment</div>
<div class="t" style="right:512.00px;top:501.04px;font-size:8.7px;color:#3c3c3c;font-weight:normal;font-style:normal;transform:scaleX(0.9195402298850576);transform-origin:right;">28,333</div>
<div class="t" style="right:454.00px;top:501.04px;font-size:8.7px;color:#3c3c3c;font-weight:normal;font-style:normal;transform:scaleX(0.9195402298850576);transform-origin:right;">2,521</div>
<div class="t" style="right:396.00px;top:501.04px;font-size:8.7px;color:#3c3c3c;font-weight:normal;font-style:normal;transform:scaleX(0.9195402298850576);transform-origin:right;">3,271</div>
<div class="t" style="right:337.70px;top:501.04px;font-size:8.7px;color:#3c3c3c;font-weight:normal;font-style:normal;transform:scaleX(0.9195402298850576);transform-origin:right;">9,353</div>
<div class="t" style="right:277.70px;top:501.04px;font-size:8.7px;color:#3c3c3c;font-weight:normal;font-style:normal;transform:scaleX(0.9195402298850576);transform-origin:right;">43,477</div>
<div class="a" style="left:931.1px;top:114.5px;width:11.5px;height:393.5px;background:#dcdcdc"></div>
<div class="a" style="left:932.9px;top:115.2px;width:8.4px;height:8.3px;background:#fff;border:0.8px solid #c2c2c2;border-radius:1px"></div>
<svg class="a" style="left:932.9px;top:115.2px" width="9" height="9" viewBox="0 0 9 9"><path d="M2.4,5.6 H6.2 L4.3,3.4 Z" fill="#555"/></svg>
<div class="a" style="left:932.9px;top:123.6px;width:8.4px;height:21.6px;background:#fff;border:0.8px solid #c2c2c2;border-radius:1px"></div>
<div class="a" style="left:932.8px;top:498.8px;width:8.7px;height:8.5px;background:#fff;border:0.8px solid #c2c2c2;border-radius:1px"></div>
<svg class="a" style="left:932.8px;top:498.8px" width="9" height="9" viewBox="0 0 9 9"><path d="M2.4,3.4 H6.4 L4.4,5.6 Z" fill="#555"/></svg>
<div class="a" style="left:147.2px;top:476.2px;width:10.4px;height:10.5px;border:0.9px solid #b4b4b4;background:#ececec"></div>
<svg class="a" style="left:147.2px;top:476.2px" width="11" height="11" viewBox="0 0 11 11"><path d="M2.6,5.25 H7.8 M5.2,2.6 V7.9" stroke="#444" stroke-width="1.1"/></svg>
<div class="a" style="left:147.2px;top:488.1px;width:10.4px;height:10.5px;border:0.9px solid #b4b4b4;background:#ececec"></div>
<svg class="a" style="left:147.2px;top:488.1px" width="11" height="11" viewBox="0 0 11 11"><path d="M2.6,5.25 H7.8 M5.2,2.6 V7.9" stroke="#444" stroke-width="1.1"/></svg>
<div class="a" style="left:147.2px;top:500.3px;width:10.4px;height:10.5px;border:0.9px solid #b4b4b4;background:#ececec"></div>
<svg class="a" style="left:147.2px;top:500.3px" width="11" height="11" viewBox="0 0 11 11"><path d="M2.6,5.25 H7.8 M5.2,2.6 V7.9" stroke="#444" stroke-width="1.1"/></svg>
<div class="a" style="left:145.5px;top:508.9px;width:785.6px;height:12.6px;background:#dcdcdc"></div>
<div class="a" style="left:145.5px;top:508.9px;width:59.9px;height:15.6px;background:#e6e6e6;border-right:0.8px solid #c8c8c8"></div>
<svg class="a" style="left:158px;top:512px" width="28" height="9" viewBox="0 0 28 9"><path d="M5.6,2.4 L3.6,4.4 L5.6,6.4" fill="none" stroke="#c0c0c0" stroke-width="0.9"/><path d="M20.8,2.4 L22.8,4.4 L20.8,6.4" fill="none" stroke="#c0c0c0" stroke-width="0.9"/></svg>
<div class="a" style="left:205.4px;top:508px;width:58.2px;height:15px;background:#fff"></div>
<div class="a" style="left:205.4px;top:521.2px;width:58.4px;height:1.5px;background:#217346"></div>
<div class="t" style="left:213.30px;top:511.38px;font-size:9px;color:#217346;font-weight:bold;font-style:normal;transform:scaleX(0.83);transform-origin:left;">PL Variance</div>
<div class="a" style="left:263.6px;top:508.9px;width:36.6px;height:15.6px;background:#e6e6e6"></div>
<div class="t" style="left:271.10px;top:511.38px;font-size:9px;color:#707070;font-weight:normal;font-style:normal;transform:scaleX(0.87);transform-origin:left;">Notes</div>
<div class="a" style="left:300px;top:510.5px;width:0.8px;height:12px;background:#c4c4c4"></div>
<div class="a" style="left:300.8px;top:508.9px;width:630px;height:15.6px;background:#e6e6e6"></div>
<div class="a" style="left:607.6px;top:511px;width:0.8px;height:10px;border-left:0.8px dotted #bdbdbd"></div>
<div class="a" style="left:612px;top:508.9px;width:319px;height:12.6px;background:#dcdcdc"></div>
<div class="a" style="left:616.3px;top:512.4px;width:9.3px;height:8.6px;background:#fff;border:0.8px solid #c2c2c2;border-radius:1px"></div>
<svg class="a" style="left:616.3px;top:512.4px" width="10" height="9" viewBox="0 0 10 9"><path d="M5.8,2.4 V6.4 L3.6,4.4 Z" fill="#555"/></svg>
<div class="a" style="left:625.5px;top:512.4px;width:143px;height:8.6px;background:#fff;border:0.8px solid #c2c2c2;border-radius:1px"></div>
<div class="a" style="left:921.1px;top:512.2px;width:8.7px;height:8.8px;background:#fff;border:0.8px solid #c2c2c2;border-radius:1px"></div>
<svg class="a" style="left:921.1px;top:512.2px" width="9" height="9" viewBox="0 0 9 9"><path d="M3.4,2.4 V6.4 L5.6,4.4 Z" fill="#555"/></svg>
<div class="a" style="left:300.8px;top:521.5px;width:646px;height:3px;background:#e6e6e6"></div>
<svg class="a" style="left:0;top:0" width="108" height="330" viewBox="0 0 108 330"><polygon points="12.7,47.3 18.4,42.6 24.1,47.3 24.1,55.5 12.7,55.5" fill="#fff"/><polyline points="11,48.6 18.4,41.9 25.8,48.6" fill="none" stroke="#4f80b5" stroke-width="1.7"/><rect x="16.9" y="50.2" width="3.9" height="5.3" fill="#313944"/><rect x="13.9" y="50" width="2.1" height="1.9" fill="#313944"/><g><rect x="10.5" y="73.6" width="4.6" height="14.6" rx="0.6" fill="#fff"/><rect x="15.6" y="73.6" width="4.6" height="14.6" rx="0.6" fill="#fff"/><g transform="rotate(-14 23 88)"><rect x="20.9" y="74" width="4.6" height="14.4" rx="0.6" fill="#fff"/><rect x="21.8" y="75" width="2.8" height="5.5" fill="#5d6876"/><rect x="22.4" y="83.5" width="1.6" height="1.6" fill="#313944"/></g><rect x="11.4" y="74.6" width="2.8" height="5.6" fill="#5d6876"/><rect x="16.5" y="74.6" width="2.8" height="5.6" fill="#5d6876"/><rect x="11.3" y="84" width="1.6" height="1.6" fill="#313944"/><rect x="13.2" y="84" width="1.4" height="1.6" fill="#313944"/><rect x="16.4" y="84" width="1.6" height="1.6" fill="#313944"/><rect x="18.3" y="84" width="1.4" height="1.6" fill="#313944"/></g><rect x="13.3" y="106" width="10.2" height="13.6" rx="1.3" fill="#2f3d4d" stroke="#fff" stroke-width="1.2"/><path d="M16.2,106.8 V105.3 H17.6 A1,1 0 0 1 19.6,105.3 H21 V106.8 Z" fill="#fff" stroke="#fff" stroke-width="0.8"/><polyline points="15.6,110.6 17.5,112.3 21.2,108.7" fill="none" stroke="#5d92d2" stroke-width="1.2"/><polyline points="15.6,114.8 17.5,116.5 21.2,112.9" fill="none" stroke="#5d92d2" stroke-width="1.2"/><rect x="12.5" y="137.5" width="12" height="14.6" fill="#2e3e50" stroke="#fff" stroke-width="1.3"/><rect x="13.4" y="139.2" width="10.2" height="1.8" fill="#fff"/><polygon points="15,143.2 15,150.6 21.6,146.9" fill="#4f86c6"/><rect x="12.7" y="169.7" width="11.3" height="15" rx="1.2" fill="#fff"/><rect x="14.1" y="171.1" width="8.5" height="2.5" fill="#4f80b5"/><rect x="14.30" y="175.20" width="2.1" height="2.0" fill="#313944"/><rect x="14.30" y="178.00" width="2.1" height="2.0" fill="#313944"/><rect x="14.30" y="180.80" width="2.1" height="2.0" fill="#313944"/><rect x="17.25" y="175.20" width="2.1" height="2.0" fill="#313944"/><rect x="17.25" y="178.00" width="2.1" height="2.0" fill="#313944"/><rect x="17.25" y="180.80" width="2.1" height="2.0" fill="#313944"/><rect x="20.20" y="175.20" width="2.1" height="2.0" fill="#313944"/><rect x="20.20" y="178.00" width="2.1" height="2.0" fill="#313944"/><rect x="20.20" y="180.80" width="2.1" height="2.0" fill="#313944"/><circle cx="18.6" cy="208.7" r="5.8" fill="none" stroke="#3f6d9e" stroke-width="1.1"/><path d="M11,205.5 H14.6 L16.8,207.7 V212.7 H11 Z" fill="#313944" stroke="#fff" stroke-width="1"/><path d="M14.4,205.5 V207.9 H16.8" fill="none" stroke="#fff" stroke-width="0.9"/><circle cx="22.8" cy="207.3" r="1.8" fill="#fff"/><path d="M19.7,213 C19.7,210.5 20.8,209.5 22.8,209.5 C24.8,209.5 26,210.5 26,213 Z" fill="#fff"/><path d="M14,236.5 C11,238.5 11,245.5 14,247.5" fill="none" stroke="#3f6d9e" stroke-width="1" stroke-dasharray="1.5 1"/><path d="M22.2,236.5 C25.2,238.5 25.2,245.5 22.2,247.5" fill="none" stroke="#3f6d9e" stroke-width="1" stroke-dasharray="1.5 1"/><rect x="15.3" y="235.2" width="5.6" height="3.6" rx="1" fill="none" stroke="#fff" stroke-width="1.1"/><rect x="15.3" y="240.3" width="5.6" height="3.6" rx="1" fill="none" stroke="#fff" stroke-width="1.1"/><rect x="15.3" y="245.4" width="5.6" height="3.6" rx="1" fill="none" stroke="#fff" stroke-width="1.1"/><path d="M12.6,280.2 L19.6,273.2" stroke="#4f86c6" stroke-width="2.4" stroke-linecap="round"/><path d="M18.4,274.4 L22.4,270.4" stroke="#fff" stroke-width="2"/><path d="M19.8,268.6 L22.6,267.6 L26.6,271.6 L25,273.4 L22.8,272.6 L21.2,271.2 Z" fill="#fff"/><path d="M11.4,268.8 A3.4,3.4 0 0 0 16.2,273.4 L22.6,279.8 A1.5,1.5 0 0 0 24.8,277.6 L18.4,271.2 A3.4,3.4 0 0 0 13.8,266.6 L15.6,268.6 L14.2,270.2 Z" fill="#fff"/><circle cx="23.6" cy="278.6" r="0.6" fill="#313944"/><path d="M23.23,304.17 L25.47,304.64 L25.47,307.96 L23.23,308.43 L23.22,308.46 L24.47,310.37 L22.12,312.72 L20.21,311.47 L20.18,311.48 L19.71,313.72 L16.39,313.72 L15.92,311.48 L15.89,311.47 L13.98,312.72 L11.63,310.37 L12.88,308.46 L12.87,308.43 L10.63,307.96 L10.63,304.64 L12.87,304.17 L12.88,304.14 L11.63,302.23 L13.98,299.88 L15.89,301.13 L15.92,301.12 L16.39,298.88 L19.71,298.88 L20.18,301.12 L20.21,301.13 L22.12,299.88 L24.47,302.23 L23.22,304.14 Z" fill="#fff"/><circle cx="18.05" cy="306.3" r="2.5" fill="#313944"/></svg>
</div>
<div id="bord"></div>
</body></html>
